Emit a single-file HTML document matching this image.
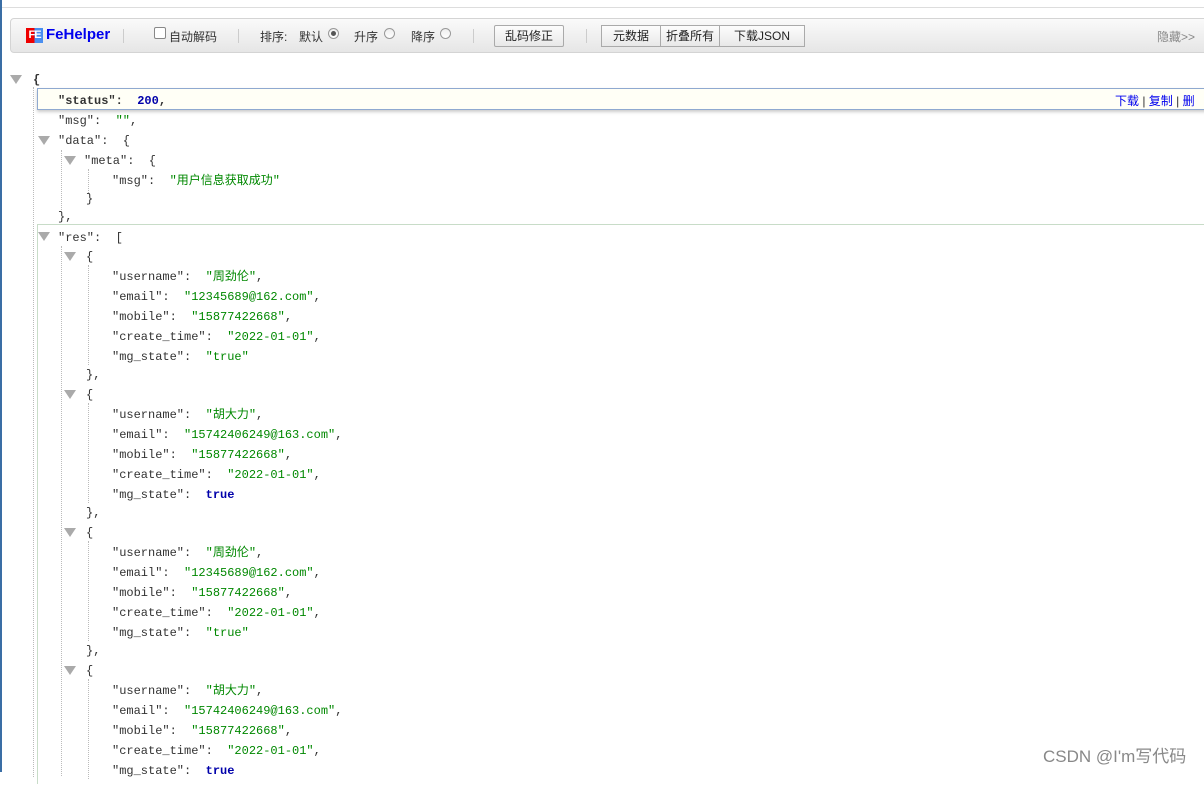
<!DOCTYPE html>
<html><head><meta charset="utf-8"><style>
*{margin:0;padding:0;box-sizing:border-box}
body{width:1204px;height:772px;overflow:hidden;background:#fff;position:relative;font-family:"Liberation Sans","Noto Sans CJK SC",sans-serif}
.edge{position:absolute;left:0;top:0;width:2px;height:772px;background:#3a6ea5}
.topline{position:absolute;left:2px;right:0;top:7px;height:1px;background:#ddd}
.bar{position:absolute;left:10px;right:-5px;top:18px;height:35px;border:1px solid #d4d4d4;border-radius:4px;background:linear-gradient(#fafafa,#e6e6e6);font-size:12px;color:#333}
.bar span,.bar div{position:absolute}
.sep{top:10px;width:1px;height:14px;background:#ccc}
.rad{width:11px;height:11px;border:1px solid #999;border-radius:50%;background:linear-gradient(#eee,#fff);top:9px}
.btn{top:6px;height:22px;border:1px solid #aaa;background:linear-gradient(#fdfdfd,#e8e8e8);line-height:20px;text-align:center;font-size:12px;color:#222}
.c{position:absolute;left:0;top:2px;width:1204px;height:800px}
.l{position:absolute;font-family:"Liberation Mono","Noto Sans CJK SC",monospace;font-size:12px;line-height:16px;white-space:pre;color:#333}
.s{color:#080}.n{color:#00a;font-weight:bold}.b{color:#00a;font-weight:bold}
.tri{position:absolute;width:0;height:0;border-left:6px solid transparent;border-right:6px solid transparent;border-top:9px solid #aaa}
.dot{position:absolute;width:0;border-left:1px dotted #bbb}
</style></head><body>
<div class="edge"></div><div class="topline"></div>
<div class="bar">
 <div style="left:15px;top:9px;width:17px;height:15px;background:linear-gradient(90deg,#e00 50%,#4a8ff0 50%);color:#fff;font-weight:bold;font-size:11px;line-height:15px;text-align:center;letter-spacing:-1px">FE</div>
 <span style="left:35px;top:7px;font-size:15px;font-weight:bold;color:#0000ee">FeHelper</span>
 <div class="sep" style="left:112px"></div>
 <div style="left:143px;top:8px;width:12px;height:12px;border:1px solid #888;background:#fff;border-radius:2px"></div>
 <span style="left:158px;top:9px">自动解码</span>
 <div class="sep" style="left:227px"></div>
 <span style="left:249px;top:9px">排序:</span>
 <span style="left:288px;top:9px">默认</span>
 <div class="rad" style="left:317px"><div style="left:2px;top:2px;width:5px;height:5px;border-radius:50%;background:#555"></div></div>
 <span style="left:343px;top:9px">升序</span><div class="rad" style="left:373px"></div>
 <span style="left:400px;top:9px">降序</span><div class="rad" style="left:429px"></div>
 <div class="sep" style="left:462px"></div>
 <div class="btn" style="left:483px;width:70px;border-radius:2px">乱码修正</div>
 <div class="sep" style="left:575px"></div>
 <div class="btn" style="left:590px;width:60px">元数据</div>
 <div class="btn" style="left:649px;width:60px">折叠所有</div>
 <div class="btn" style="left:708px;width:86px">下载JSON</div>
 <span style="left:1146px;top:9px;color:#888">隐藏&gt;&gt;</span>
</div>

<div class="dot" style="left:33px;top:87px;height:690px"></div>
<div class="dot" style="left:61px;top:150px;height:60px"></div>
<div class="dot" style="left:88px;top:169px;height:24px"></div>
<div class="dot" style="left:61px;top:246px;height:530px"></div>
<div style="position:absolute;left:37px;top:224px;width:1170px;height:560px;border-left:1px solid #c8dcc8;border-top:1px solid #c8dcc8"></div>
<div class="dot" style="left:88px;top:265px;height:100px"></div>
<div class="dot" style="left:88px;top:403px;height:100px"></div>
<div class="dot" style="left:88px;top:541px;height:100px"></div>
<div class="dot" style="left:88px;top:679px;height:100px"></div>

<div style="position:absolute;left:37px;top:88px;width:1170px;height:22px;background:#fffff6;border:1px solid #8fa9d0;box-shadow:0 2px 3px #ccc"></div>
<div class="l" style="left:1115px;top:93px;color:#00e;font-family:'Liberation Sans','Noto Sans CJK SC',sans-serif">下载 <span style="color:#333">|</span> 复制 <span style="color:#333">|</span> 删</div>

<div class="c">
<div class="tri" style="left:10px;top:73px"></div>
<div class="l" style="left:33px;top:70px;font-weight:bold">{</div>
<div class="l" style="left:58px;top:91px;font-weight:bold">"status":  <span class="n">200</span>,</div>
<div class="l" style="left:58px;top:111px">"msg":  <span class="s">""</span>,</div>
<div class="tri" style="left:38px;top:134px"></div>
<div class="l" style="left:58px;top:131px">"data":  {</div>
<div class="tri" style="left:64px;top:154px"></div>
<div class="l" style="left:84px;top:151px">"meta":  {</div>
<div class="l" style="left:112px;top:171px">"msg":  <span class="s">"用户信息获取成功"</span></div>
<div class="l" style="left:86px;top:189px">}</div>
<div class="l" style="left:58px;top:207px">},</div>
<div class="tri" style="left:38px;top:230px"></div>
<div class="l" style="left:58px;top:228px">"res":  [</div>

<div class="tri" style="left:64px;top:250px"></div><div class="l" style="left:86px;top:247px">{</div>
<div class="l" style="left:112px;top:267px">"username":  <span class="s">"周劲伦"</span>,</div>
<div class="l" style="left:112px;top:287px">"email":  <span class="s">"12345689@162.com"</span>,</div>
<div class="l" style="left:112px;top:307px">"mobile":  <span class="s">"15877422668"</span>,</div>
<div class="l" style="left:112px;top:327px">"create_time":  <span class="s">"2022-01-01"</span>,</div>
<div class="l" style="left:112px;top:347px">"mg_state":  <span class="s">"true"</span></div>
<div class="l" style="left:86px;top:365px">},</div>

<div class="tri" style="left:64px;top:388px"></div><div class="l" style="left:86px;top:385px">{</div>
<div class="l" style="left:112px;top:405px">"username":  <span class="s">"胡大力"</span>,</div>
<div class="l" style="left:112px;top:425px">"email":  <span class="s">"15742406249@163.com"</span>,</div>
<div class="l" style="left:112px;top:445px">"mobile":  <span class="s">"15877422668"</span>,</div>
<div class="l" style="left:112px;top:465px">"create_time":  <span class="s">"2022-01-01"</span>,</div>
<div class="l" style="left:112px;top:485px">"mg_state":  <span class="b">true</span></div>
<div class="l" style="left:86px;top:503px">},</div>

<div class="tri" style="left:64px;top:526px"></div><div class="l" style="left:86px;top:523px">{</div>
<div class="l" style="left:112px;top:543px">"username":  <span class="s">"周劲伦"</span>,</div>
<div class="l" style="left:112px;top:563px">"email":  <span class="s">"12345689@162.com"</span>,</div>
<div class="l" style="left:112px;top:583px">"mobile":  <span class="s">"15877422668"</span>,</div>
<div class="l" style="left:112px;top:603px">"create_time":  <span class="s">"2022-01-01"</span>,</div>
<div class="l" style="left:112px;top:623px">"mg_state":  <span class="s">"true"</span></div>
<div class="l" style="left:86px;top:641px">},</div>

<div class="tri" style="left:64px;top:664px"></div><div class="l" style="left:86px;top:661px">{</div>
<div class="l" style="left:112px;top:681px">"username":  <span class="s">"胡大力"</span>,</div>
<div class="l" style="left:112px;top:701px">"email":  <span class="s">"15742406249@163.com"</span>,</div>
<div class="l" style="left:112px;top:721px">"mobile":  <span class="s">"15877422668"</span>,</div>
<div class="l" style="left:112px;top:741px">"create_time":  <span class="s">"2022-01-01"</span>,</div>
<div class="l" style="left:112px;top:761px">"mg_state":  <span class="b">true</span></div>
</div>

<div style="position:absolute;left:1043px;top:742px;font-size:17px;color:#888;font-family:'Liberation Sans','Noto Sans CJK SC',sans-serif">CSDN @I'm写代码</div>
</body></html>
